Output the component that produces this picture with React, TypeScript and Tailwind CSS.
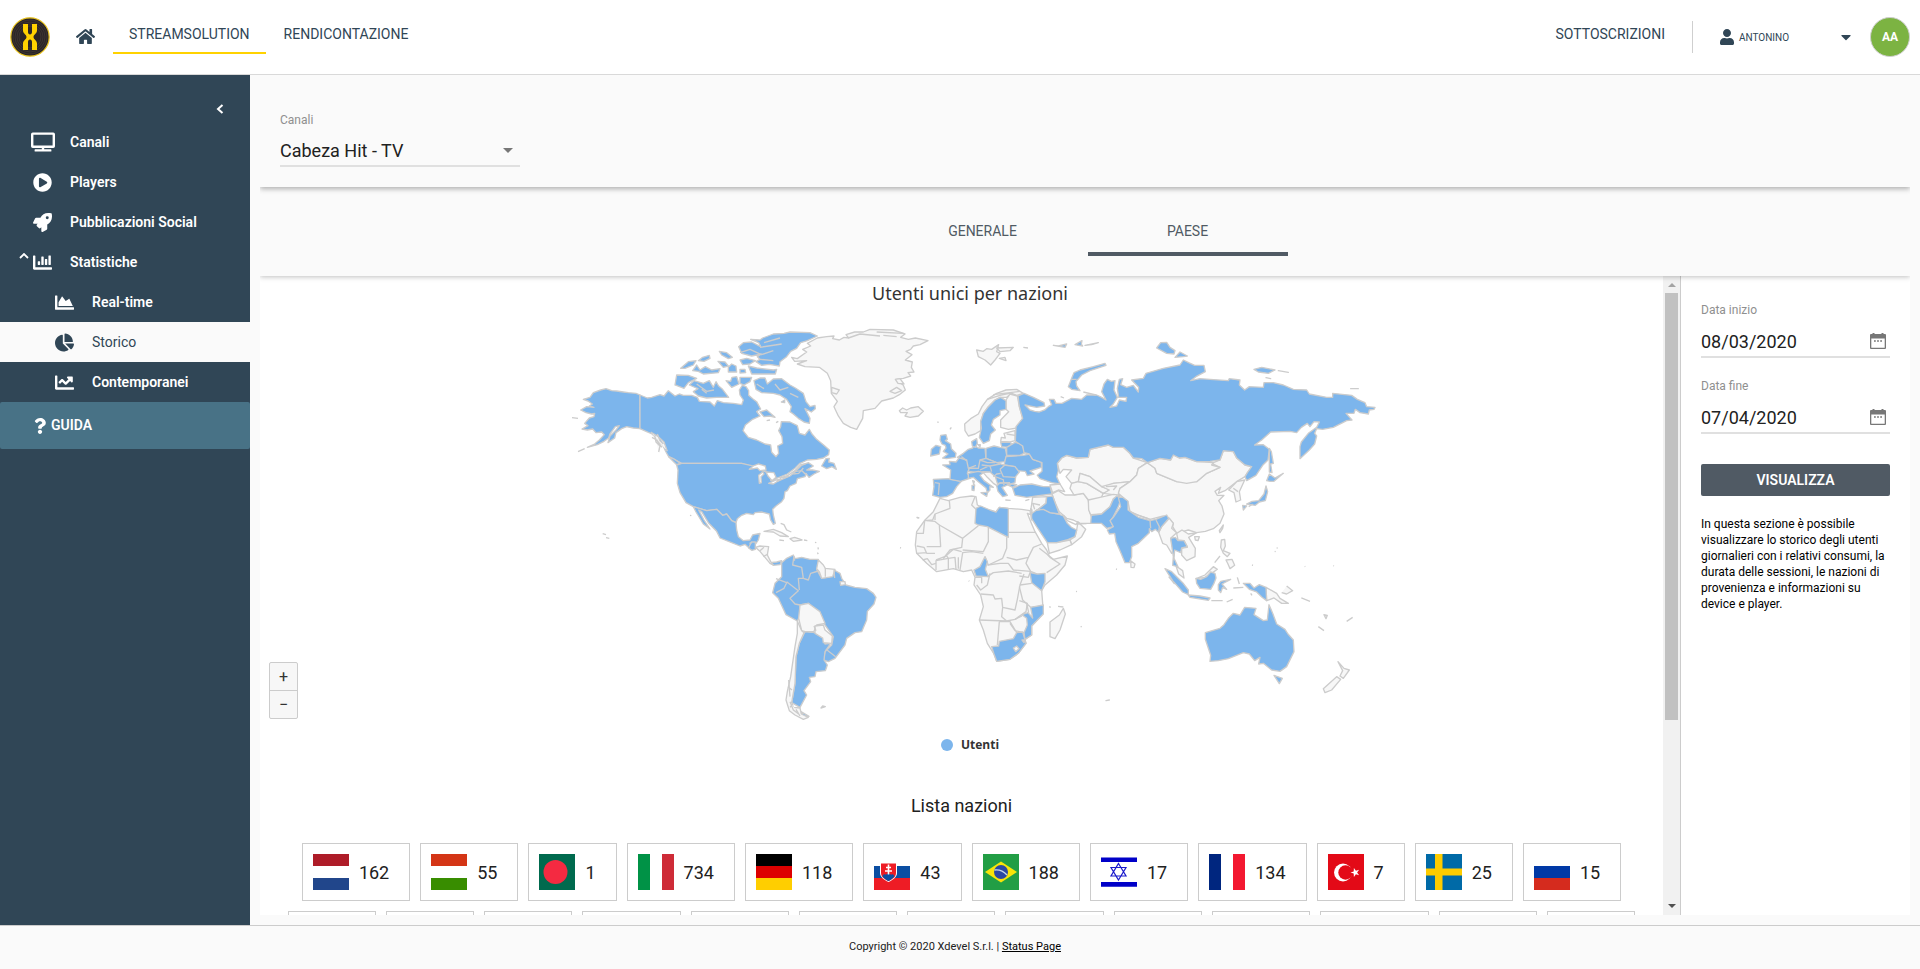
import type { ReactNode } from "react";
import {
  FaCaretDown,
  FaChartArea,
  FaChartBar,
  FaChartLine,
  FaChartPie,
  FaHome,
  FaPlayCircle,
  FaQuestion,
  FaRocket,
  FaTv,
  FaUser,
} from "react-icons/fa";

/* ---------- map ---------- */

const northAmericaActive = [
  "M240,255L228,250 205,248 190,246 170,243 155,242 138,236 122,240 100,248 90,262 70,268 84,273 97,282 88,288 102,292 80,290 62,300 78,308 95,312 104,310 102,320 88,324 74,340 84,347 66,357 82,360 98,357 108,368 125,366 133,374 118,390 104,402 82,412 112,404 132,394 146,384 150,372 166,350 178,347 168,360 150,378 144,398 164,384 168,368 185,356 200,350 220,354 240,356Z",
  "M240,255L262,264 275,262 300,254 312,258 325,242 345,258 358,252 370,256 395,256 412,262 418,274 450,276 463,288 472,272 490,278 520,280 545,284 550,270 540,255 538,240 547,226 558,230 566,242 566,256 578,266 590,275 602,297 590,305 600,318 578,328 556,345 549,362 565,382 590,390 615,402 632,405 635,427 648,440 656,430 653,408 668,400 666,380 656,362 662,350 664,335 690,336 712,347 718,370 735,375 748,358 756,372 770,388 790,404 808,420 806,434 790,444 770,448 742,450 720,460 705,475 682,492 650,505 630,518 640,500 620,488 600,480 575,470 545,460 365,460 355,455 326,440 318,426 308,405 290,385 276,372 258,364 240,356Z",
  "M700,490L725,466 745,458 760,468 740,480 758,480 778,484 762,492 747,502 738,490 712,506 708,498Z",
  "M785,468L798,446 808,445 806,456 822,460 829,478 816,470 800,476Z",
  "M326,440L340,446 362,460 350,464Z",
  "M365,460L545,460 575,467 590,468 600,480 625,488 640,490 632,512 652,514 690,498 708,484 726,482 738,494 735,500 712,506 708,520 690,528 682,542 675,545 672,565 665,575 648,588 638,598 640,615 646,640 640,643 632,630 628,612 605,606 585,608 580,614 560,610 545,616 532,626 528,638 515,632 500,612 488,616 470,598 440,602 400,590 378,578 360,548 352,520 354,480 350,465Z",
  "M400,590L440,602 470,598 488,616 500,612 515,632 528,638 530,660 535,680 550,692 570,690 578,675 600,670 595,690 585,705 580,718 565,712 555,703 540,708 515,698 480,684 470,664 445,638 425,605 416,600 432,630 450,657 430,642 408,606Z",
  "M566,714L574,696 586,696 586,718 576,721Z",
  "M630,758L650,756 665,752 660,764 640,766Z",
  "M572,88L600,90 608,84 640,72 672,70 690,66 750,68 772,78 742,92 722,98 710,115 692,124 680,140 660,155 658,168 628,163 605,166 588,155 600,148 592,140 604,132 575,138 545,130 536,110 550,98 575,96 602,110 596,98Z",
  "M565,168L590,174 640,180 650,178 646,192 575,192Z",
  "M540,178L555,178 557,188 540,189Z",
  "M505,172L515,162 528,168 530,186 505,186Z",
  "M478,124L500,128 517,142 505,146 485,135Z",
  "M540,150L560,145 586,152 570,162 548,164Z",
  "M415,152L428,142 448,136 450,145 432,154Z",
  "M362,175L385,155 408,152 400,165 375,175Z",
  "M398,182L410,165 420,180 436,170 455,180 480,176 475,188 430,192 415,184Z",
  "M474,154L495,156 505,168 490,172Z",
  "M345,225L350,195 385,196 410,205 385,218 372,235Z",
  "M388,225L402,212 430,220 448,212 460,232 468,215 476,228 486,236 506,262 470,262 440,264 415,258 400,245 414,236Z",
  "M498,212L512,214 516,202 530,200 537,222 515,232Z",
  "M540,202L575,202 570,215 552,225 540,220Z",
  "M582,212L600,204 615,204 622,222 640,207 665,206 690,225 706,234 730,250 738,275 750,290 765,286 766,296 754,306 735,296 750,325 748,340 732,336 715,325 700,312 690,305 694,290 680,268 660,255 640,250 605,248 588,238Z",
  "M600,306L620,300 645,322 630,318 612,320Z",
  "M664,276L674,270 674,278Z",
  "M620,332L630,330M648,338L655,334M36,323L54,325M54,425L74,416M128,671L138,674M138,683L148,685M390,616L394,617",
];

const northAmericaIdle = [
  "M695,142L712,146 740,126 728,118 752,108 742,100 772,84 800,80 822,78 818,86 838,90 852,82 866,84 858,74 884,66 910,66 930,58 1000,60 1035,72 1022,82 1045,88 1066,84 1104,92 1080,104 1060,108 1052,118 1038,124 1056,134 1036,150 1057,156 1054,172 1062,186 1044,188 1052,198 1030,205 1008,208 1030,226 1036,240 1018,254 1000,264 965,273 945,295 910,302 908,325 890,358 872,352 850,340 835,318 822,290 832,274 814,250 812,212 802,190 778,172 735,170 712,162 740,152 704,154Z",
  "M1018,302L1028,294 1040,300 1052,294 1075,290 1090,304 1075,318 1050,322 1035,318 1042,308 1022,308Z",
  "M586,712L600,708 626,710 622,735 632,755 640,765 630,760 615,742 598,722Z",
  "M612,664L640,658 665,668 685,680 660,678 640,666Z",
  "M690,686L704,682 726,690 700,694Z",
  "M815,232L838,240 830,252 815,248ZM990,244L1010,232 1025,242 1005,250ZM1006,208L1020,206 1032,222 1014,220Z",
  "M658,690L672,692M732,690L742,692M662,640L672,644 680,660 694,666M765,697L769,698M774,712L775,718M772,728L775,732M1070,622L1078,624M1132,336L1136,337M1170,358L1174,352M1020,713L1023,714",
  "M272,366L295,380 312,396 322,424M284,376L288,396 300,408 296,426M292,372L300,392 310,402M276,382L290,390 306,412",
  "M865,84L900,72 960,78M950,66L1030,70M970,76L1010,80",
];

const lakes = [
  "M568,478L580,468 596,462 616,468 618,480 600,482 592,474Z",
  "M598,520L596,496 608,486 612,492 603,500 604,518Z",
  "M618,486L642,488 648,502 636,512 624,498Z",
  "M626,520L648,510 662,508 640,522ZM660,504L684,496 680,502Z",
];

const northAmericaLines = [
  "M684,496L705,482 722,464 740,460",
  "M700,492L716,490 730,474",
  "M568,700L576,698M600,722L612,712M610,740L624,732",
  "M540,128L570,118 604,134 640,122M600,112L665,102M612,98L660,84M600,148L640,152",
  "M410,222L440,244 462,240M425,238L440,250M590,222L612,236M645,222L660,240 685,232M690,250L715,262",
];

const eurasiaActive = [
  "M122,376L138,374 142,388 136,392 152,402 154,416 168,430 166,442 140,446 128,444 144,432 130,424 138,414 136,406 126,402 120,390Z",
  "M92,438L94,418 108,406 122,410 118,432Z",
  "M100,508L145,506 184,514 170,530 158,550 140,560 120,562 98,556 102,530Z",
  "M128,465L150,464 148,454 168,456 180,440 205,454 208,475 202,490 212,504 182,514 150,508 152,480Z",
  "M172,442L190,430 205,418 218,414 222,406 235,414 255,415 258,445 245,455 255,465 240,480 205,475 200,450Z",
  "M215,395L230,386 232,400 226,412 217,408ZM234,404L241,404 240,411Z",
  "M242,335L250,310 265,290 285,270 302,262 318,272 318,298 300,302 300,315 280,328 274,345 286,360 272,372 268,392 250,400 238,382 244,355Z",
  "M302,397L330,397 338,405 325,412 305,410Z",
  "M258,415L282,408 300,412 316,415 320,435 315,455 290,458 258,445Z",
  "M320,412L345,397 365,402 376,428 360,436 320,436Z",
  "M312,465L318,440 370,436 388,432 398,448 424,456 424,472 390,483 402,492 382,497 376,484 350,482 345,470Z",
  "M240,450L258,445 290,458 312,465 345,470 358,486 347,500 345,518 318,526 292,520 286,500 270,486 250,485 235,488 205,484 208,474 235,475Z",
  "M205,490L235,484 250,488 240,496 252,512 280,532 269,530 270,540 262,548 258,534 235,515 220,502 205,505Z",
  "M243,548L263,547 260,559ZM216,526L224,525 222,542 216,540ZM218,512L223,514 221,522Z",
  "M290,528L300,518 330,520 316,528 306,532 322,556 308,560 294,544Z",
  "M338,535L360,525 395,522 430,530 450,530 456,552 410,558 380,562 345,556ZM326,526L336,522 350,524 338,532Z",
  "M316,570L332,571M376,572L388,568",
  "M354,258L372,250 400,262 432,278 434,288 410,292 375,285 390,300 404,304 418,306 434,300 445,290 455,284 448,268 462,268 468,280 486,280 515,265 545,268 560,255 590,255 605,262 618,270 605,245 612,222 622,208 634,214 645,212 642,240 652,262 640,282 630,292 650,288 658,270 678,274 680,262 656,262 652,235 658,208 668,206 662,224 680,232 700,226 715,246 716,232 695,210 730,205 738,190 790,175 840,165 850,150 866,158 884,166 912,166 916,185 888,200 872,212 900,206 930,208 985,212 988,206 1020,210 1018,225 1034,240 1048,230 1090,232 1092,218 1120,218 1150,225 1180,238 1220,240 1228,252 1280,262 1298,262 1298,250 1355,256 1372,268 1395,278 1400,290 1425,292 1422,298 1408,300 1405,312 1380,308 1366,298 1362,310 1338,310 1356,330 1340,332 1300,352 1268,358 1250,356 1244,370 1250,378 1244,402 1228,420 1200,446 1200,410 1204,396 1225,370 1250,352 1258,336 1242,335 1230,350 1222,340 1204,352 1190,368 1170,364 1112,366 1085,390 1064,405 1090,404 1108,418 1104,450 1088,466 1068,496 1040,512 1035,500 1042,488 1055,470 1035,465 1010,444 1000,425 970,422 960,450 930,454 890,455 855,442 838,444 820,435 812,450 780,445 742,458 725,446 700,444 688,428 670,412 640,412 625,405 570,418 565,442 530,444 500,436 485,444 472,460 475,482 470,500 480,522 455,518 420,506 412,496 426,484 426,458 398,448 388,432 372,428 368,408 346,394 348,350 368,325 358,290Z",
  "M505,230L515,205 522,188 540,180 580,170 615,160 618,166 570,182 545,195 528,215 530,228 540,242 515,238Z",
  "M460,106L475,108 500,102 495,112ZM525,104L546,92 544,102 548,108ZM555,106L595,98 575,104Z",
  "M770,114L782,98 800,97 810,112 825,122 822,132 800,130ZM825,142L840,126 862,138 850,140Z",
  "M1062,178L1085,172 1125,180 1105,190 1075,186ZM1135,182L1165,187ZM1098,203L1112,206ZM1352,236L1375,236ZM550,246L588,255M482,260L492,264",
  "M1108,415L1114,425 1120,460 1112,462 1116,488 1108,486Z",
  "M1100,512L1108,492 1125,504 1150,490 1122,514 1110,514Z",
  "M1098,528L1103,545 1096,572 1078,576 1066,586 1040,582 1056,574 1076,572 1092,552Z",
  "M1028,586L1040,588 1030,600ZM1046,590L1058,582",
  "M574,616L605,612 630,590 640,568 650,558 664,562 655,590 640,620 632,632 640,650 620,655 604,640 572,640Z",
  "M655,562L668,562 684,574 684,600 715,622 750,632 768,628 800,615 806,625 785,650 776,667 766,658 755,665 748,656 748,668 715,700 695,710 695,740 688,758 675,758 660,722 648,695 644,670 628,672 622,660 640,650 630,632 640,622 662,590Z",
  "M812,685L826,682 834,692 852,692 862,710 845,714 842,728 824,720 822,745 834,770 818,766 820,740Z",
  "M393,612L410,600 430,596 450,608 475,612 490,618 502,640 514,652 530,660 525,680 500,690 470,698 442,698 430,680 410,650 395,626Z",
  "M440,560L458,558 466,580 478,612 450,608 430,598 412,600 438,580ZM392,596L396,600 394,630Z",
  "M795,776L815,785 848,818 865,840 865,854 848,846 818,812Z",
  "M865,855L900,858 930,864 925,871 870,862Z",
  "M888,805L902,808 920,800 932,786 945,790 948,804 942,820 932,838 900,835 890,820Z",
  "M955,824L962,814 992,808 966,822 980,838 968,832 962,848 955,840Z",
  "M1030,820L1050,820 1062,834 1078,824 1098,832 1100,872 1086,862 1070,846 1048,838Z",
  "M934,872L968,872M1000,834L1030,832M1012,802L1018,822M806,800L824,822M1052,850L1056,856M980,876L998,868",
];

const eurasiaIdle = [
  "M194,342L212,326 235,312 246,290 262,268 290,250 318,240 350,238 370,250 350,256 335,250 320,262 300,262 285,270 265,290 250,310 242,335 242,362 225,372 205,378 195,362Z",
  "M318,270L330,252 352,258 358,290 368,325 352,354 325,358 302,352 302,330 326,305 318,298Z",
  "M312,370L345,362 345,392 330,396 302,394 304,382 316,384Z",
  "M250,488L275,484 290,500 296,530 280,520 262,502Z",
  "M230,120L250,124 260,116 275,118 296,104 290,125 300,130 285,150 272,165 255,150 235,140ZM290,114L340,112 330,122 300,125ZM298,145L315,142 318,152ZM370,112L384,114",
  "M472,460L485,444 500,436 530,444 565,442 570,418 625,405 640,412 670,412 688,428 700,444 742,458 715,475 710,495 690,515 640,520 620,530 605,530 570,500 540,490 535,515 515,520 498,500 515,480 490,478 480,490Z",
  "M450,525L480,522 494,545 475,540 458,548Z",
  "M456,552L475,542 495,555 520,555 550,550 565,570 568,600 580,640 540,640 520,630 500,625 478,605 466,580Z",
  "M515,520L535,515 560,520 610,550 600,570 565,570 550,550 522,555 510,535Z",
  "M540,490L570,500 605,530 622,536 625,545 610,550 560,520 535,515Z",
  "M605,530L640,520 690,515 660,535 655,556 610,550 628,540Z",
  "M565,570L600,562 640,553 662,556 640,566 630,590 605,612 572,614 566,600Z",
  "M655,550L660,535 690,515 710,495 715,475 742,458 765,475 770,490 830,515 890,515 920,490 960,472 935,460 960,450 970,422 1000,425 1010,444 1035,465 1055,470 1035,500 1010,515 975,542 955,550 962,532 945,544 952,556 972,556 956,572 966,588 972,612 960,640 940,656 916,664 890,668 865,660 830,670 818,650 820,640 808,625 790,618 750,628 715,618 690,605 684,575Z",
  "M742,458L780,445 812,450 820,435 838,444 855,442 890,455 940,458 935,465 960,472 920,490 890,515 860,520 830,515 770,490 765,475Z",
  "M1010,515L1034,510 1018,545 1022,570 1008,576 1002,548 986,540Z",
  "M690,604L715,616 750,628 745,634 700,620Z",
  "M692,752L705,762 702,773 693,772Z",
  "M808,625L820,640 815,655 830,668 812,685 820,720 815,730 800,705 788,700 776,667 785,650Z",
  "M830,670L846,660 865,672 890,668 866,682 886,715 885,740 860,752 845,735 845,714 862,712 852,692 834,690Z",
  "M828,768L848,782 852,804 836,792ZM888,806L915,795 940,770 952,778 938,788 915,802ZM884,680L898,680 894,692 886,690Z",
  "M398,562L440,560 438,580 412,600 396,612 393,596Z",
  "M530,660L534,636 557,658 545,680 515,704 510,690 525,680Z",
  "M442,698L470,698 510,690 515,704 480,720 448,730Z",
  "M1098,832L1130,850 1140,865 1165,880 1145,880 1122,864 1100,872Z",
  "M1145,848L1160,852 1178,842 1160,828M1204,864L1230,874",
  "M962,712L964,690 974,688 976,708 970,722 990,730 982,740 970,730ZM978,750L996,748 1004,766 990,776 984,762ZM944,758L960,738M958,662L970,645 968,655 960,668Z",
];

const eurasiaLines = [
  "M105,518L118,520 115,555",
  "M240,450L262,458 285,458M245,465L270,468 300,462M270,468L275,485M300,478L315,465M300,478L310,500 345,502M286,500L312,510M292,520L330,518M240,480L262,470M205,475L228,466M280,500L290,492 302,490M310,510L312,526",
  "M528,642L560,641M490,615L502,632 528,644 534,634",
  "M750,630L752,655M768,630L778,650 776,667M700,610L745,626",
  "M618,530L650,528 640,540M262,268L300,256 340,248M280,254L360,244",
  "M530,208L515,208M320,372L345,376M1000,535L1014,545",
  "M184,440L198,450M404,598L398,580 420,585",
];

const southActive = [
  "M222,300L240,290 255,260 262,275 256,298 265,320 228,318Z",
  "M390,308L412,312 435,310 435,335 425,362 395,338Z",
  "M392,412L430,405 430,432 395,468 395,495 375,508 372,488 382,465 380,445 366,434 384,428 398,444Z",
  "M275,530L296,528 298,514 340,506 350,488 368,486 378,520 355,550 330,568 290,574 282,552Z",
  "M228,115L242,108 270,120 288,126 298,112 325,115 325,202 262,170 235,165 225,160Z",
  "M916,488L960,475 972,464 985,445 1000,430 1020,435 1034,412 1068,415 1062,434 1090,452 1102,450 1107,404 1118,430 1130,462 1155,478 1164,492 1180,510 1182,545 1160,590 1140,604 1115,600 1090,580 1076,582 1080,562 1064,572 1048,552 1030,548 985,566 955,572 930,574 932,556 916,508Z",
  "M1122,616L1147,625 1138,641Z",
  "M618,692L628,690ZM1255,470L1272,482",
];

const africa =
  "M120,85L145,92 180,82 215,78 228,80 232,105 270,122 288,126 298,112 325,115 365,118 390,122 392,134 382,130 390,150 405,185 425,220 440,240 448,258 460,268 502,258 495,285 470,315 435,345 425,362 428,400 430,430 395,468 395,495 375,508 378,520 355,550 330,568 290,574 282,552 262,520 250,480 238,450 250,410 242,375 222,345 225,322 215,300 190,305 160,296 110,305 80,280 50,250 46,225 50,185 75,150 100,125Z";

const southIdle = [
  "M450,456L478,435 490,415 496,432 480,480 465,506 450,500Z",
  "M1314,575L1332,595 1348,600 1330,625 1320,618 1328,602Z",
  "M1310,620L1322,628 1295,660 1275,668 1270,656Z",
  "M1272,434L1282,436 1278,446ZM1340,454L1358,442",
  "M340,534L350,528 357,536 347,545ZM366,510L375,510 372,518Z",
];

const africaLines = [
  "M148,92L150,115 105,132 98,150 74,152 70,190 50,190",
  "M105,150L105,132M80,152L104,154 118,165 122,230 80,230",
  "M118,165L188,205 235,167M188,205L185,232 150,240 130,265",
  "M225,80L215,105 228,118M265,172L265,215 250,245 188,240",
  "M325,187L408,187M320,202L320,235 308,265 265,285 255,260",
  "M320,262L350,270 385,262 400,232 425,222",
  "M385,262L378,280 392,304 412,312M440,308L480,282 450,262 438,250M418,235L445,256",
  "M180,300L188,248 215,245 250,250M145,300L145,265 165,262 168,298M175,262L175,296",
  "M108,300L108,272 145,265 140,258 108,270M130,265L160,238 185,245",
  "M50,228L72,232 80,250 105,250M50,250L80,248M68,270L82,266 95,284 108,280",
  "M262,285L300,280 325,280 340,300 392,304M262,320L280,308 325,303 365,310",
  "M270,310L262,345 242,360 230,345M242,372L280,375 285,387 305,385 308,412 345,420 352,388 360,345 372,312",
  "M238,450L320,453 345,448 378,425 382,400 358,392M308,412L305,440 320,453",
  "M360,345L395,340M358,350L368,390 392,412 428,408M380,400L386,428",
  "M298,455L292,525M298,455L330,455 350,488M330,460L345,482 372,488M345,448L366,438",
  "M225,322L245,322 245,340M358,318L385,322 390,308M50,142L56,144M206,332L208,334",
  "M448,410L452,412M528,364L531,365M542,469L545,471M648,297L651,298M1056,285L1059,286M1124,244L1127,245M1130,234L1133,234M1214,289L1216,290M1300,287L1302,288M474,409L490,411",
];

const americaActive = [
  "M125,158L140,145 160,135 165,146 185,142 210,148 235,148 238,165 230,178 245,205 270,200 282,180 300,190 305,205 318,225 345,232 380,236 400,250 408,262 402,282 382,304 380,330 365,365 345,368 320,385 315,405 285,445 265,455 250,450 255,425 275,405 280,380 255,345 240,310 205,280 180,285 178,320 172,333 138,314 115,265 98,248 105,220 125,200Z",
  "M195,365L225,368 250,385 255,402 272,400 255,425 252,450 262,465 256,482 228,485 225,500 208,502 212,515 192,542 200,555 180,592 155,578 165,520 168,440 178,400Z",
  "M183,605L207,619 187,619ZM243,594L248,588 256,590Z",
];

const americaIdle = [
  "M235,150L250,165 256,175 285,178 278,200 245,205 238,185 230,176Z",
  "M180,285L205,280 240,305 255,340 230,345 222,364 195,365 185,362 176,325Z",
  "M225,348L250,345 255,360 277,378 275,400 250,398 248,384 225,370Z",
  "M172,333L185,362 192,368 178,400 168,440 165,520 155,578 160,592 180,594 184,612 205,622 190,628 165,615 148,602 138,570 142,545 152,500 165,410 172,370Z",
  "M300,215L315,215 316,224 302,226Z",
  "M146,510L150,560M144,530L156,540M150,575L160,600 176,612M168,598L180,618M158,582L150,592",
];

const americaLines = [
  "M162,138L158,165 185,172 190,205 175,205 178,240",
  "M190,205L205,210 212,190 235,183M256,175L256,200M282,180L284,204",
  "M108,206L140,218 132,235 108,248M140,215L175,242 150,265 165,282 180,285",
  "M258,418L287,440M222,348L228,362M162,146L164,152",
];

function Shapes({ paths, className }: { paths: string[]; className: string }) {
  return (
    <>
      {paths.map((d) => (
        <path key={d} d={d} className={className} />
      ))}
    </>
  );
}

const ACTIVE = "fill-[#7cb5ec]";
const IDLE = "fill-[#f7f7f7]";
const LINE = "fill-none";

function WorldMap() {
  return (
    <svg
      viewBox="555 310 830 420"
      className="h-[420px] w-full stroke-[#cccccc] stroke-[4px]"
      strokeLinejoin="round"
      role="img"
      aria-label="Utenti unici per nazioni"
    >
      <g transform="translate(560 310) scale(0.33333)">
        <Shapes paths={northAmericaActive} className={ACTIVE} />
        <Shapes paths={northAmericaIdle} className={IDLE} />
        <Shapes paths={lakes} className="fill-white" />
        <Shapes paths={northAmericaLines} className={LINE} />
      </g>
      <g transform="translate(900 310) scale(0.33333)">
        <Shapes paths={eurasiaIdle} className={IDLE} />
        <Shapes paths={eurasiaActive} className={ACTIVE} />
        <Shapes paths={eurasiaLines} className={LINE} />
      </g>
      <g transform="translate(900 470) scale(0.33333)">
        <path d={africa} className={IDLE} />
        <Shapes paths={africaLines} className={LINE} />
        <Shapes paths={southActive} className={ACTIVE} />
        <Shapes paths={southIdle} className={IDLE} />
      </g>
      <g transform="translate(740 510) scale(0.33333)">
        <Shapes paths={americaActive} className={ACTIVE} />
        <Shapes paths={americaIdle} className={IDLE} />
        <Shapes paths={americaLines} className={LINE} />
      </g>
    </svg>
  );
}

/* ---------- flags ---------- */

function Rows({ colors }: { colors: string[] }) {
  return (
    <>
      {colors.map((c, i) => (
        <rect key={i} y={i * 12} width="36" height="12" fill={c} />
      ))}
    </>
  );
}

function Columns({ colors }: { colors: string[] }) {
  return (
    <>
      {colors.map((c, i) => (
        <rect key={i} x={i * 12} width="12" height="36" fill={c} />
      ))}
    </>
  );
}

type Nation = { name: string; users: number; flag: ReactNode };

const nations: Nation[] = [
  { name: "Paesi Bassi", users: 162, flag: <Rows colors={["#ae1c28", "#fff", "#21468b"]} /> },
  { name: "Ungheria", users: 55, flag: <Rows colors={["#d43516", "#fff", "#388d00"]} /> },
  {
    name: "Bangladesh",
    users: 1,
    flag: (
      <>
        <rect width="36" height="36" fill="#006a4e" />
        <circle cx="16.5" cy="18" r="12" fill="#f42a41" />
      </>
    ),
  },
  { name: "Italia", users: 734, flag: <Columns colors={["#009246", "#fff", "#ce2b37"]} /> },
  { name: "Germania", users: 118, flag: <Rows colors={["#000", "#d00", "#ffce00"]} /> },
  {
    name: "Slovacchia",
    users: 43,
    flag: (
      <>
        <Rows colors={["#fff", "#0b4ea2", "#ee1c25"]} />
        <path d="M6 9h17v10c0 4-4 7-8.500 9C10 26 6 23 6 19z" fill="#fff" />
        <path d="M7 9.500h15V19c0 4-4 6.500-7.500 8C11 25.500 7 23 7 19z" fill="#ee1c25" />
        <path d="M8.500 22c1-2 3-2 3.500-1 1-2 4-2 5 0 .5-1 2.500-1 3.500 1-1.500 2.500-4 4-6 5-2-1-5-2.500-6-5z" fill="#0b4ea2" />
        <path d="M14.500 10.500v10M12 13.500h5M11 17h7" stroke="#fff" strokeWidth="1.600" />
      </>
    ),
  },
  {
    name: "Brasile",
    users: 188,
    flag: (
      <>
        <rect width="36" height="36" fill="#229e45" />
        <path d="M18 7.500 34 18 18 28.500 2 18z" fill="#f8e509" />
        <circle cx="18" cy="18" r="7" fill="#2b49a3" />
        <path d="M11.500 16q7-1 12.500 5" fill="none" stroke="#c8d8ea" strokeWidth="1.400" />
      </>
    ),
  },
  {
    name: "Israele",
    users: 17,
    flag: (
      <>
        <rect width="36" height="36" fill="#fff" />
        <path d="M0 3.500h36V8H0zM0 28h36v4.700H0z" fill="#0000c8" />
        <path d="M17.500 9.500 25 22H10zM17.500 26 25 13.500H10z" fill="none" stroke="#1a1acc" strokeWidth="1.200" />
      </>
    ),
  },
  { name: "Francia", users: 134, flag: <Columns colors={["#00267f", "#fff", "#f31830"]} /> },
  {
    name: "Turchia",
    users: 7,
    flag: (
      <>
        <rect width="36" height="36" fill="#e30a17" />
        <circle cx="15" cy="18.500" r="9" fill="#fff" />
        <circle cx="17.500" cy="18.500" r="7.200" fill="#e30a17" />
        <path d="m22.500 18.500 3.200-1 .2-3.400 2 2.700 3.200-1-2 2.700 2 2.700-3.200-1-2 2.700-.2-3.400z" fill="#fff" />
      </>
    ),
  },
  {
    name: "Svezia",
    users: 25,
    flag: (
      <>
        <rect width="36" height="36" fill="#006aa7" />
        <path d="M9 0h7.500v36H9zM0 14.500h36v7H0z" fill="#fecc00" />
      </>
    ),
  },
  { name: "Russia", users: 15, flag: <Rows colors={["#fff", "#0039a6", "#d52b1e"]} /> },
];

const moreNations = [
  "w-22",
  "w-22",
  "w-22",
  "w-[99px]",
  "w-[98px]",
  "w-[98px]",
  "w-22",
  "w-[99px]",
  "w-22",
  "w-[98px]",
  "w-[109px]",
  "w-[98px]",
  "w-22",
];

/* ---------- shell ---------- */

function Logo() {
  return (
    <svg viewBox="0 0 40 40" className="size-10" aria-label="Xdevel" role="img">
      <circle cx="20" cy="20" r="19.200" fill="#2a2527" stroke="#e8c21c" strokeWidth="1.200" />
      {[17, 15, 13, 11].map((r) => (
        <circle key={r} cx="20" cy="20" r={r} fill="none" stroke="#4a4038" strokeWidth="0.600" />
      ))}
      <path
        d="M13 7h5v8c0 1.500.8 2.500 2 2.500s2-1 2-2.500V7h5v6.500c0 3-3.500 4-3.500 6.500s3.500 3.500 3.500 6.500V33h-5v-8c0-1.500-.8-2.500-2-2.500s-2 1-2 2.500v8h-5v-6.500c0-3 3.500-4 3.500-6.500S13 16.500 13 13.500z"
        fill="#ffd200"
      />
    </svg>
  );
}

function Header() {
  return (
    <header className="flex h-[75px] shrink-0 items-start border-b border-[#d9d9d9] bg-white text-[#304656]">
      <a href="#home" className="mt-[17px] ml-2.5">
        <Logo />
      </a>
      <a href="#dashboard" aria-label="Home" className="mt-[27px] ml-[26px]">
        <FaHome className="size-[19px]" />
      </a>
      <nav className="mt-[17px] ml-[18px] flex text-[14px] leading-[35px]">
        <a href="#stream" className="border-b-2 border-[#ffd200] px-4">
          STREAMSOLUTION
        </a>
        <a href="#rendicontazione" className="ml-[18px]">
          RENDICONTAZIONE
        </a>
      </nav>
      <div className="ml-auto flex items-start">
        <a href="#sottoscrizioni" className="mt-[17px] text-[14px] leading-[35px]">
          SOTTOSCRIZIONI
        </a>
        <div className="mt-[21px] ml-[27px] h-8 w-px bg-[#cfcfcf]" />
        <button type="button" className="mt-[27px] ml-[26px] flex h-5 w-[135px] items-center">
          <FaUser className="size-4" />
          <span className="ml-1 text-[10px]">ANTONINO</span>
          <FaCaretDown className="ml-auto size-4" />
        </button>
        <div className="mt-[17px] mr-2.5 ml-4 flex size-10 items-center justify-center rounded-full border border-[#cfcfcf] bg-[#7cb342] text-[12px] font-bold text-white">
          AA
        </div>
      </div>
    </header>
  );
}

type MenuItemProps = { icon: ReactNode; label: string; sub?: boolean; active?: boolean; open?: boolean };

function MenuItem({ icon, label, sub, active, open }: MenuItemProps) {
  return (
    <li className={active ? "bg-[#fafafa] text-[#304656]" : "font-semibold"}>
      <a href={"#" + label} className={sub ? "flex h-10 items-center pl-[54px]" : "flex h-10 items-center pl-[18px]"}>
        {!sub && (
          <span className="w-3.5 pb-3">
            {open && (
              <svg viewBox="0 0 10 6" className="ml-px h-1.5 w-2.5" fill="none" stroke="currentColor" strokeWidth="1.800">
                <path d="M1 5l4-4 4 4" />
              </svg>
            )}
          </span>
        )}
        <span className="flex w-[38px]">{icon}</span>
        {label}
      </a>
    </li>
  );
}

function Sidebar() {
  return (
    <aside className="w-[250px] shrink-0 bg-[#304656] text-[14px] text-white">
      <div className="flex h-[47px] items-end justify-end pr-[26px]">
        <button type="button" aria-label="Chiudi menu" className="pb-2">
          <svg viewBox="0 0 8 10" className="h-2.5 w-2" fill="none" stroke="currentColor" strokeWidth="2">
            <path d="M6.500 1 2 5l4.500 4" />
          </svg>
        </button>
      </div>
      <ul>
        <MenuItem icon={<FaTv className="-ml-px h-5 w-6" />} label="Canali" />
        <MenuItem icon={<FaPlayCircle className="ml-px size-[19px]" />} label="Players" />
        <MenuItem icon={<FaRocket className="ml-px size-[19px]" />} label="Pubblicazioni Social" />
        <MenuItem icon={<FaChartBar className="ml-px size-[19px]" />} label="Statistiche" open />
        <MenuItem icon={<FaChartArea className="ml-px size-[19px]" />} label="Real-time" sub />
        <MenuItem icon={<FaChartPie className="ml-px size-[19px]" />} label="Storico" sub active />
        <MenuItem icon={<FaChartLine className="ml-px size-[19px]" />} label="Contemporanei" sub />
      </ul>
      <a href="#guida" className="flex h-[47px] items-center rounded-xs bg-[#487286] pl-8 font-semibold">
        <FaQuestion className="mr-[3px] size-4" />
        GUIDA
      </a>
    </aside>
  );
}

function DateField({ id, label, value }: { id: string; label: string; value: string }) {
  return (
    <div className="mb-5">
      <label htmlFor={id} className="block text-[12px] leading-4 text-[#8f8f8f]">
        {label}
      </label>
      <div className="mt-2 flex h-8 items-center border-b-2 border-[#e0e0e0]">
        <input id={id} type="text" defaultValue={value} className="min-w-0 flex-1 bg-transparent text-[18px] text-[#212121] outline-none" />
        <svg viewBox="0 0 16 16" className="mr-1 size-4 fill-[#777]" aria-hidden="true">
          <path d="M2.500 0h2v1h7V0h2v1H15a1 1 0 0 1 1 1v13a1 1 0 0 1-1 1H1a1 1 0 0 1-1-1V2a1 1 0 0 1 1-1h1.500zM1.300 5.500v9.200h13.400V5.500zM4 7.200h1.800v1.600H4zm3.100 0h1.800v1.600H7.100zm3.100 0H12v1.600h-1.800z" fillRule="evenodd" />
        </svg>
      </div>
    </div>
  );
}

export default function App() {
  return (
    <div className="flex h-screen flex-col bg-[#fafafa] font-[Roboto,sans-serif] text-[#212121]">
      <Header />
      <div className="flex min-h-0 flex-1">
        <Sidebar />
        <main className="flex min-w-0 flex-1 flex-col px-2.5 pb-2.5">
          <section className="relative z-10 h-28 shrink-0 px-5 pt-[37px] shadow-[0_2px_5px_rgba(0,0,0,0.3)] [clip-path:inset(0_0_-8px_0)]">
            <label htmlFor="canali" className="block text-[12px] leading-4 text-[#8f8f8f]">
              Canali
            </label>
            <div className="mt-[7px] flex h-8 w-60 items-center border-b-2 border-[#e0e0e0]">
              <select id="canali" className="w-full flex-1 appearance-none bg-transparent text-[18px] outline-none">
                <option>Cabeza Hit - TV</option>
              </select>
              <svg viewBox="0 0 10 5" className="mr-[7px] h-[5px] w-2.5 fill-[#777]">
                <path d="M0 0h10L5 5z" />
              </svg>
            </div>
          </section>
          <div
            role="tablist"
            className="relative z-10 flex h-[89px] shrink-0 justify-center gap-[5px] pt-6 text-[14px] text-[#505a64] shadow-[0_1px_5px_rgba(0,0,0,0.25)] [clip-path:inset(0_0_-8px_0)]"
          >
            <button type="button" role="tab" aria-selected="false" className="h-[45px] w-[200px] border-b-4 border-transparent">
              GENERALE
            </button>
            <button type="button" role="tab" aria-selected="true" className="h-[45px] w-[200px] border-b-4 border-[#505a64]">
              PAESE
            </button>
          </div>
          <div className="flex min-h-0 flex-1 bg-white">
            <section className="flex min-w-0 flex-1 flex-col overflow-hidden">
              <h2 className="mt-1 pl-[17px] text-center font-['Noto_Sans',sans-serif] text-[18px] leading-[26px] text-[#333]">
                Utenti unici per nazioni
              </h2>
              <div className="relative mt-1 shrink-0 pl-[17px]">
                <WorldMap />
                <div className="absolute bottom-[11px] left-[9px] flex w-[29px] flex-col divide-y divide-[#ccc] rounded-xs border border-[#ccc] bg-[#f7f7f7] text-[16px] text-[#333]">
                  <button type="button" className="h-7">+</button>
                  <button type="button" className="h-[27px]">−</button>
                </div>
              </div>
              <div className="mt-1 flex shrink-0 items-center justify-center gap-2 pl-[17px] font-['Open_Sans',sans-serif] text-[12px] leading-[22px] font-bold text-[#333]">
                <span className="size-3 rounded-full bg-[#7cb5ec]" />
                Utenti
              </div>
              <h3 className="mt-[38px] text-center text-[18px] leading-6">Lista nazioni</h3>
              <ul className="mt-[25px] flex shrink-0 justify-center gap-2.5">
                {nations.map((n) => (
                  <li key={n.name} title={n.name} className="flex h-[58px] items-center border border-[#ccc] px-2.5">
                    <svg viewBox="0 0 36 36" className="size-9">
                      {n.flag}
                    </svg>
                    <span className="mx-2.5 text-[18px]">{n.users}</span>
                  </li>
                ))}
              </ul>
              <ul className="mt-2.5 flex shrink-0 justify-center gap-2.5">
                {moreNations.map((w, i) => (
                  <li key={i} className={"h-[58px] border border-[#ccc] " + w} />
                ))}
              </ul>
            </section>
            <div className="flex w-[17px] shrink-0 flex-col items-center justify-between bg-[#f1f1f1] px-0.5">
              <div className="flex w-full flex-1 flex-col items-center">
                <svg viewBox="0 0 8 4" className="mt-[7px] mb-1.5 h-1 w-2 shrink-0 fill-[#a3a3a3]">
                  <path d="M0 4h8L4 0z" />
                </svg>
                <div className="h-[68%] w-full bg-[#c1c1c1]" />
              </div>
              <svg viewBox="0 0 8 4" className="mb-[7px] h-1 w-2 shrink-0 fill-[#505050]">
                <path d="M0 0h8L4 4z" />
              </svg>
            </div>
            <aside className="w-[230px] shrink-0 border-l border-[#ccc] px-5 pt-[26px]">
              <DateField id="inizio" label="Data inizio" value="08/03/2020" />
              <DateField id="fine" label="Data fine" value="07/04/2020" />
              <button type="button" className="mt-2.5 h-8 w-full rounded-xs bg-[#505a64] text-[14px] font-semibold text-white">
                VISUALIZZA
              </button>
              <p className="mt-5 text-[12px] leading-4 text-black">
                In questa sezione è possibile visualizzare lo storico degli utenti giornalieri con i relativi consumi, la
                durata delle sessioni, le nazioni di provenienza e informazioni su device e player.
              </p>
            </aside>
          </div>
        </main>
      </div>
      <footer className="flex h-[44px] shrink-0 items-center justify-center border-t border-[#ccc] pr-2.5 text-[11px]">
        <p>
          Copyright © 2020 Xdevel S.r.l. |{" "}
          <a href="#status" className="text-black underline">
            Status Page
          </a>
        </p>
      </footer>
    </div>
  );
}
